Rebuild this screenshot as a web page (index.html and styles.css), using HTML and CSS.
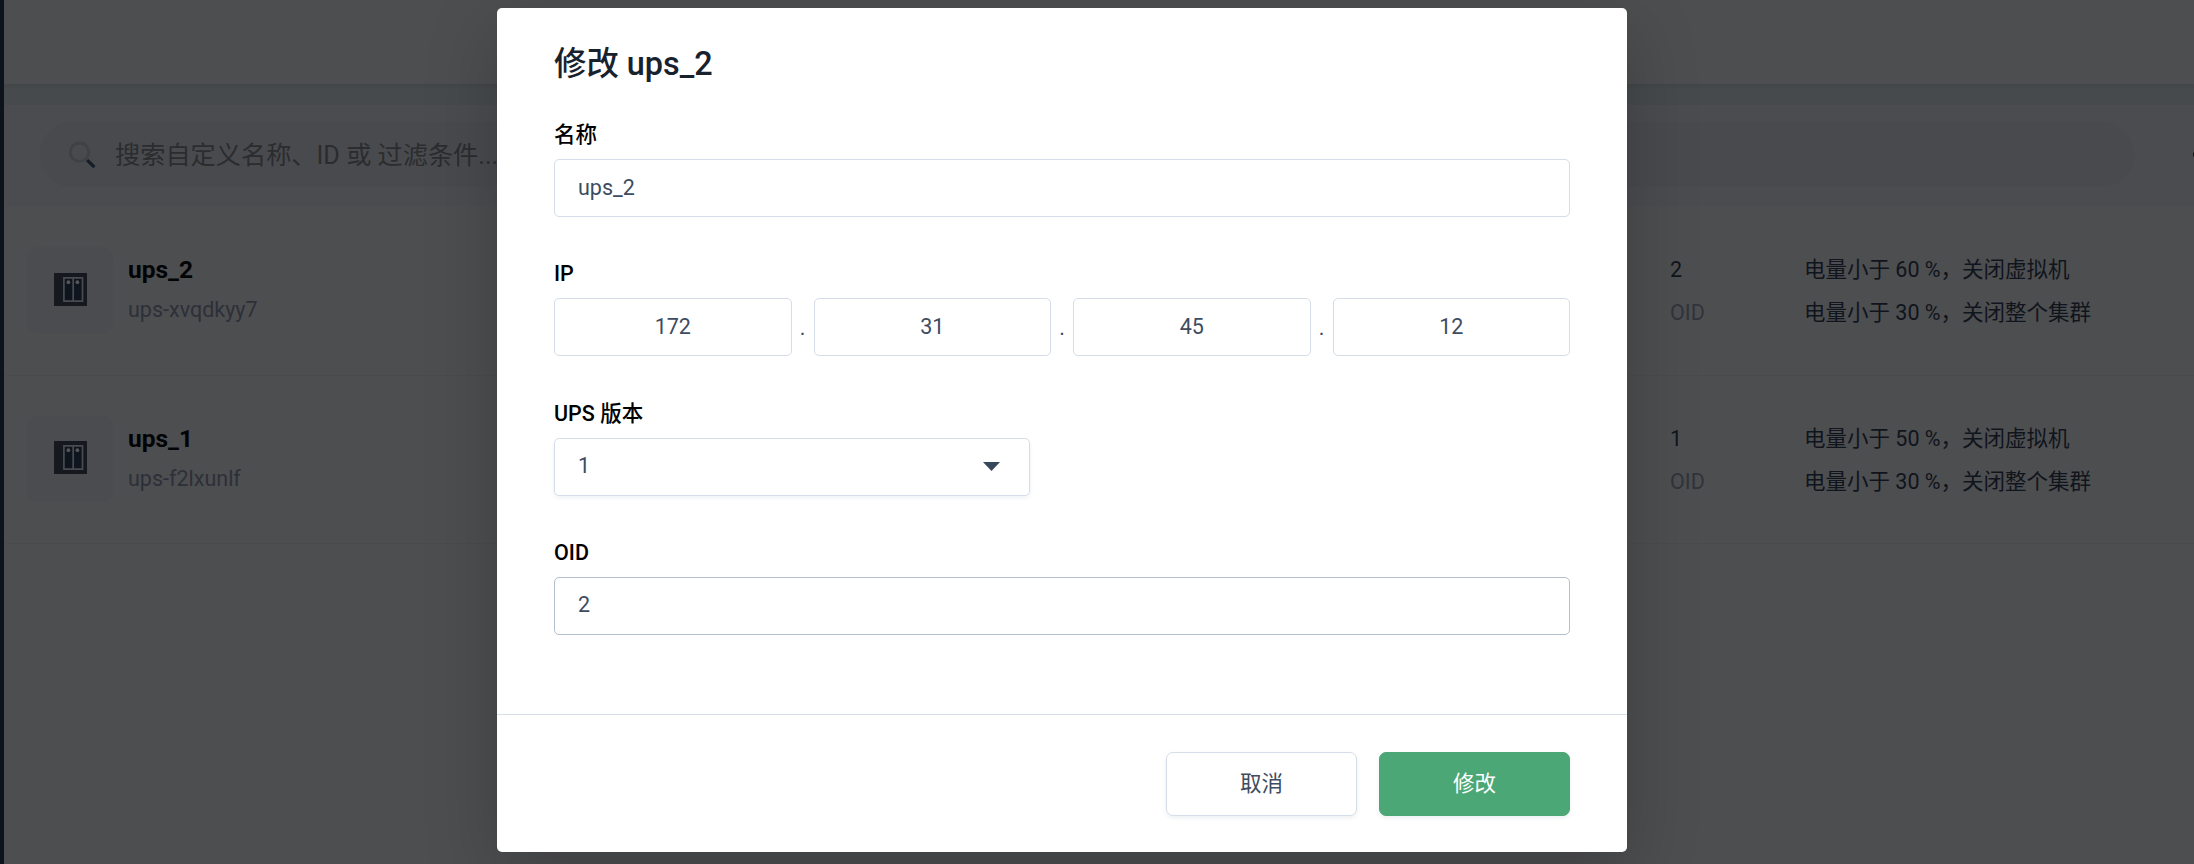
FILE: index.html
```html
<!DOCTYPE html>
<html lang="zh-CN">
<head>
<meta charset="utf-8">
<title>修改 ups_2</title>
<link rel="stylesheet" href="styles.css">
</head>
<body>
<svg class="sprite" aria-hidden="true">
  <symbol id="ups" viewBox="0 0 33 33">
    <path fill="#15191f" d="M0 0h33v33H0z"/>
    <path fill="#0f151e" d="M9 4h20v25H9z"/>
    <path fill="none" stroke="#4a4b4f" stroke-width="1.7" d="M9.9 4.8h18.6v23.4H9.9zM19.2 4.8v23.4"/>
    <circle cx="14.4" cy="9.2" r="1.9" fill="#55565a"/>
    <circle cx="23.4" cy="9.2" r="1.9" fill="#55565a"/>
  </symbol>
</svg>
<div class="app">
  <aside class="rail"></aside>
  <main class="page">
    <header class="topbar"></header>
    <div class="search-panel">
      <div class="search">
        <svg class="search-icon" width="28" height="28" viewBox="0 0 28 28">
          <circle cx="11.6" cy="11.2" r="9.2" fill="none" stroke="#3c4246" stroke-width="2.8"/>
          <path d="M19.2 19.2l7.2 7" stroke="#151c27" stroke-width="3.2"/>
        </svg>
        <span class="hint">搜索自定义名称、ID 或 过滤条件...</span>
      </div>
      <span class="more"></span>
    </div>
    <section class="row">
      <div class="thumb"><svg width="33" height="33"><use href="#ups"/></svg></div>
      <div class="ident"><b class="name">ups_2</b><span class="uid">ups-xvqdkyy7</span></div>
      <div class="oid"><span>2</span><span class="muted">OID</span></div>
      <div class="rules"><span>电量小于 60 %，关闭虚拟机</span><span>电量小于 30 %，关闭整个集群</span></div>
    </section>
    <section class="row">
      <div class="thumb"><svg width="33" height="33"><use href="#ups"/></svg></div>
      <div class="ident"><b class="name">ups_1</b><span class="uid">ups-f2lxunlf</span></div>
      <div class="oid"><span>1</span><span class="muted">OID</span></div>
      <div class="rules"><span>电量小于 50 %，关闭虚拟机</span><span>电量小于 30 %，关闭整个集群</span></div>
    </section>
  </main>
</div>
<div class="modal">
  <div class="modal-body">
    <h1 class="title">修改 ups_2</h1>
    <div class="group"><div class="label">名称</div><div class="field">ups_2</div></div>
    <div class="group"><div class="label">IP</div>
      <div class="ip">
        <div class="field octet">172</div><i class="dot">.</i>
        <div class="field octet">31</div><i class="dot">.</i>
        <div class="field octet">45</div><i class="dot">.</i>
        <div class="field octet">12</div>
      </div>
    </div>
    <div class="group"><div class="label">UPS 版本</div>
      <div class="field select">1<svg width="17" height="9" viewBox="0 0 17 9"><path fill="#37475c" d="M0 0h17L8.5 9z"/></svg></div>
    </div>
    <div class="group"><div class="label">OID</div><div class="field active">2</div></div>
  </div>
  <div class="modal-foot">
    <div class="btn">取消</div>
    <div class="btn primary">修改</div>
  </div>
</div>
</body>
</html>
```
FILE: styles.css
```css
* { box-sizing: border-box; }
body {
  margin: 0;
  height: 864px;
  overflow: hidden;
  font: 21.5px/30px Roboto, "Noto Sans CJK SC", sans-serif;
  background: #4d4e50;
}
.sprite { position: absolute; width: 0; height: 0; }
.app { display: flex; width: 2194px; height: 864px; }
.rail { width: 4px; background: #0d131a; }
.page { flex: 1; min-width: 0; background: #4d4e50; }
.topbar { height: 84px; }
.search-panel {
  display: flex;
  align-items: center;
  gap: 59px;
  height: 123px;
  padding: 18px 0 0 36px;
  background: linear-gradient(#434546, #464a4d 5px, #464a4d 21px, #4b4c50 21px);
  overflow: hidden;
}
.search {
  display: flex;
  flex: none;
  align-items: center;
  gap: 19px;
  width: 2094px;
  height: 65px;
  padding-left: 28px;
  border-radius: 33px;
  background: #494a4e;
  color: #2b2c2e;
  font-size: 25.2px;
  line-height: 36px;
}
.search-icon { margin-top: 1px; flex: none; }
.hint { padding-top: 3px; }
.more { flex: none; width: 9px; height: 9px; border-radius: 50%; background: #111; }
.row { display: flex; height: 168.5px; border-bottom: 1px solid #494b4d; color: #10141c; }
.thumb {
  display: flex;
  align-items: center;
  justify-content: center;
  width: 86px;
  height: 86px;
  margin: 40px 15px 0 23px;
  padding: 0 0 2px;
  border-radius: 11px;
  background: #4b4c50;
}
.ident, .oid, .rules { display: flex; flex-direction: column; gap: 13px; padding-top: 48px; white-space: nowrap; }
.ident { width: 1542px; gap: 10px; }
.name { font-size: 24.5px; color: #020305; }
.uid { color: #2c3038; }
.oid { width: 134px; }
.muted { color: #30343c; }

.modal {
  position: absolute;
  left: 497px;
  top: 8px;
  display: flex;
  flex-direction: column;
  width: 1130px;
  height: 844px;
  border-radius: 5px;
  background: #fff;
  box-shadow: 0 22px 75px rgba(0, 0, 0, .2);
  color: #3d4c61;
}
.modal-body { height: 706px; padding: 33px 57px 0; }
.title { margin: 0; font-size: 32.4px; line-height: 46px; font-weight: 500; color: #18222d; }
.group { height: 139.33px; }
.title + .group { margin-top: 33px; }
.label { height: 39px; font-weight: 500; color: #000; }
.field {
  display: flex;
  align-items: center;
  height: 58px;
  padding: 0 23px 1px;
  border: 1px solid #d5dde8;
  border-radius: 5px;
}
.ip { display: flex; }
.octet { flex: 1; justify-content: center; }
.dot { width: 22px; line-height: 60px; text-align: center; font-style: normal; }
.select { justify-content: space-between; width: 476px; padding-right: 29px; box-shadow: 0 2px 4px rgba(30, 50, 80, .07); }
.active { border-color: #b4bfcd; }
.modal-foot {
  display: flex;
  justify-content: flex-end;
  gap: 22px;
  padding: 37px 57px 0;
  border-top: 1px solid #d7e0e8;
}
.btn {
  display: flex;
  align-items: center;
  justify-content: center;
  width: 191px;
  height: 64px;
  padding-bottom: 1px;
  border: 1px solid #d5dde8;
  border-radius: 7px;
  box-shadow: 0 2px 4px rgba(30, 50, 80, .08);
}
.primary { border-color: #4ca777; background: #4ca777; color: #fff; }
```
